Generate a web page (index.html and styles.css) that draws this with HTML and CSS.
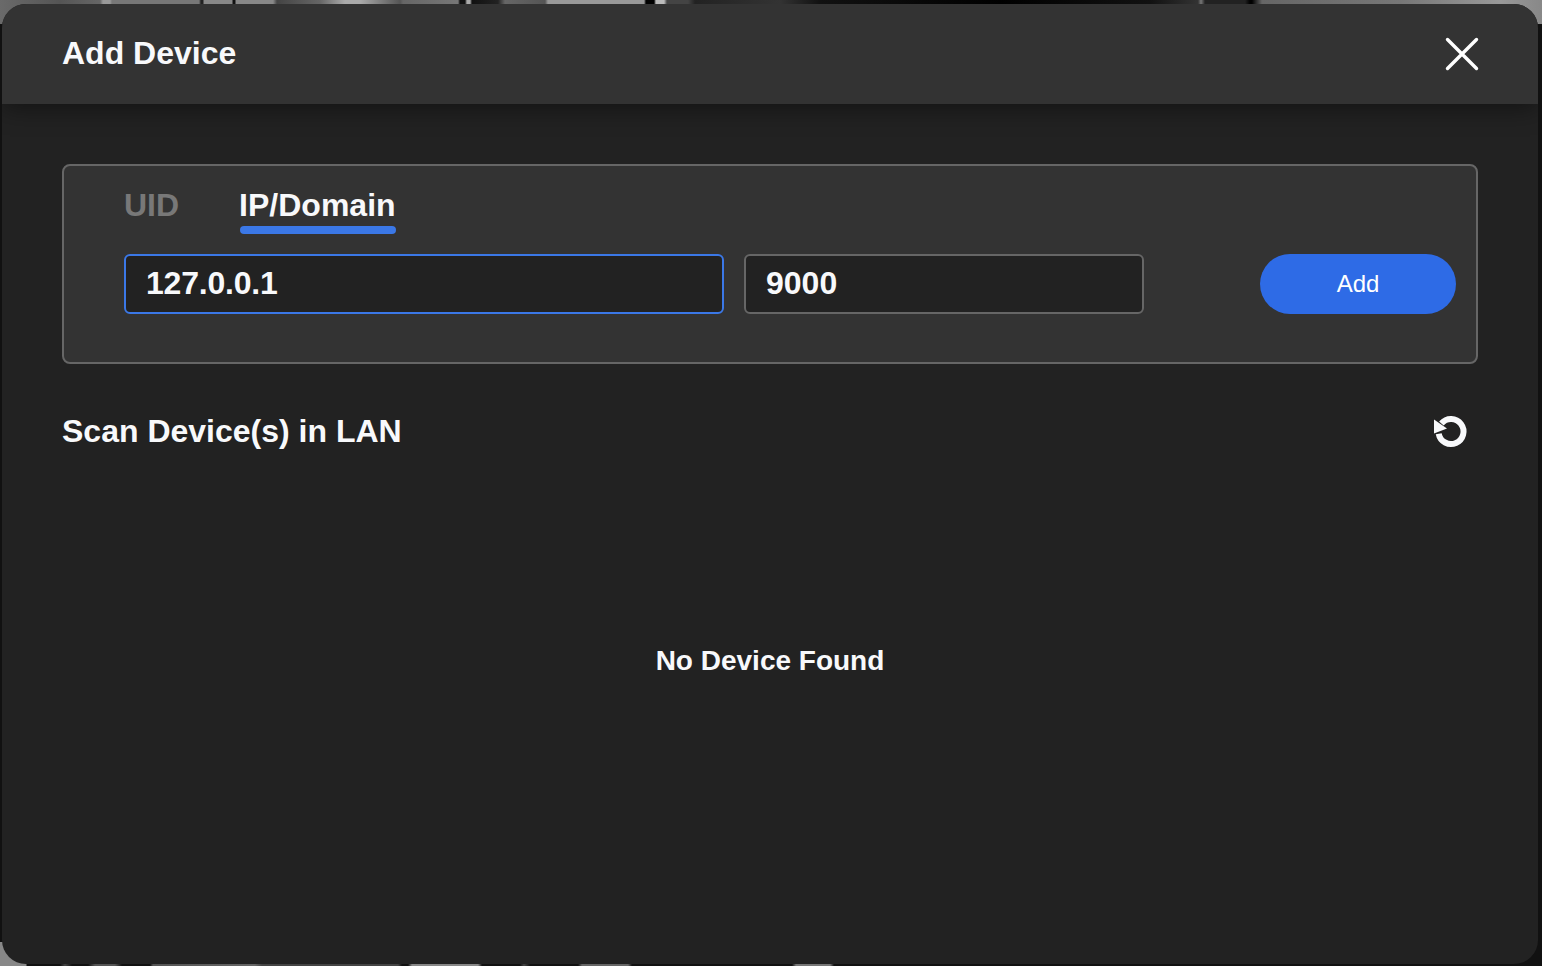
FILE: index.html
```html
<!DOCTYPE html>
<html lang="en">
<head>
<meta charset="utf-8">
<title>Add Device</title>
<link rel="stylesheet" href="styles.css">
</head>
<body>
<div class="backdrop">
  <section class="modal">
    <header class="modal-header">
      <h1 class="modal-title">Add Device</h1>
      <button class="close-btn" aria-label="Close">
        <svg width="34" height="34" viewBox="0 0 34 34"><path d="M2.5 2.5 L31.5 31.5 M31.5 2.5 L2.5 31.5" stroke="#fff" stroke-width="3.4" stroke-linecap="round" fill="none"/></svg>
      </button>
    </header>
    <div class="modal-body">
      <div class="panel">
        <div class="tabs">
          <div class="tab">UID</div>
          <div class="tab tab-active">IP/Domain</div>
        </div>
        <div class="form-row">
          <input class="field field-ip" value="127.0.0.1">
          <input class="field field-port" value="9000">
          <button class="add-btn">Add</button>
        </div>
      </div>
      <div class="scan-row">
        <h2 class="scan-title">Scan Device(s) in LAN</h2>
        <button class="refresh-btn" aria-label="Refresh">
          <svg width="36" height="36" viewBox="0 0 36 36"><path d="M8.4 10.5 A12.5 12.5 0 1 1 5.7 20.7" stroke="#f8f9fb" stroke-width="6" fill="none"/><path d="M1 6.5 L1 20.5 L14 15.5 Z" fill="#f8f9fb"/></svg>
        </button>
      </div>
      <p class="empty">No Device Found</p>
    </div>
  </section>
</div>
</body>
</html>
```
FILE: styles.css
```css
* { box-sizing: border-box; }
html, body { margin: 0; height: 100%; }
body { font-family: "Liberation Sans", Arial, sans-serif; overflow: hidden; }
.backdrop {
  width: 1542px;
  height: 966px;
  padding: 4px 4px 2px 2px;
  background:
    linear-gradient(90deg, #6a6a6a 0, #555 60px, #666 100px, #999 103px, #999 110px, #777 112px, #777 199px, #222 201px, #222 203px, #888 204px, #888 232px, #111 233px, #111 235px, #888 236px, #888 273px, #444 277px, #666 320px, #aaa 345px, #aaa 360px, #555 400px, #666 403px, #777 458px, #111 460px, #111 465px, #aaa 467px, #aaa 470px, #111 472px, #222 498px, #666 505px, #555 545px, #999 548px, #999 644px, #000 646px, #000 654px, #bbb 656px, #bbb 664px, #444 667px, #444 688px, #222 695px, #333 780px, #111 820px, #000 1000px, #111 1150px, #333 1198px, #777 1201px, #222 1205px, #222 1245px, #000 1250px, #000 1252px, #666 1262px, #777 1400px, #999 1500px, #888 1542px) top / 100% 24px no-repeat,
    linear-gradient(90deg, #888 0, #888 26px, #111 27px, #111 60px, #444 65px, #111 72px, #111 88px, #555 95px, #555 115px, #111 122px, #111 150px, #555 153px, #666 255px, #444 262px, #444 398px, #111 402px, #111 408px, #888 412px, #888 478px, #111 482px, #111 520px, #444 524px, #111 530px, #111 578px, #666 582px, #666 628px, #111 632px, #111 792px, #777 796px, #777 830px, #111 834px, #111 1542px) bottom / 100% 24px no-repeat,
    #111;
}
.modal {
  height: 960px;
  display: flex;
  flex-direction: column;
  background: #222;
  border-radius: 24px;
  overflow: hidden;
  color: #f8f9fb;
}
.modal-header {
  height: 100px;
  flex: none;
  display: flex;
  align-items: center;
  justify-content: space-between;
  padding: 0 59px 0 60px;
  background: #333;
  box-shadow: 0 4px 24px rgba(0, 0, 0, .45);
  position: relative;
}
.modal-title { margin: 0 0 2px; font-size: 32px; line-height: 40px; font-weight: 700; }
.close-btn, .refresh-btn {
  padding: 0;
  border: 0;
  background: none;
  display: flex;
}
.modal-body { flex: 1; padding: 60px 60px 0; }
.panel {
  height: 200px;
  background: #333;
  border: 2px solid #666;
  border-radius: 8px;
  padding: 0 20px 0 60px;
}
.tabs { display: flex; gap: 60px; height: 68px; }
.tab {
  height: 68px;
  padding-top: 19px;
  font-size: 32px;
  line-height: 40px;
  font-weight: 700;
  color: #787878;
}
.tab-active {
  color: #f8f9fb;
  position: relative;
}
.tab-active::after {
  content: "";
  position: absolute;
  left: 1px;
  right: 0;
  bottom: 0;
  height: 8px;
  background: #3b78e7;
  border-radius: 4px;
}
.form-row { display: flex; align-items: center; margin-top: 20px; }
.field {
  height: 60px;
  background: #222;
  border: 2px solid #666;
  border-radius: 6px;
  padding: 0 20px 2px;
  color: #f8f9fb;
  font: 700 32px/40px "Liberation Sans", Arial, sans-serif;
  outline: none;
}
.field-ip { width: 600px; border-color: #3b78e7; letter-spacing: -.2px; }
.field-port { width: 400px; margin-left: 20px; }
.add-btn {
  width: 196px;
  height: 60px;
  margin-left: auto;
  background: #2e6be6;
  border: 0;
  border-radius: 30px;
  color: #fff;
  font: 400 24px/30px "Liberation Sans", Arial, sans-serif;
}
.scan-row {
  display: flex;
  align-items: center;
  justify-content: space-between;
  margin-top: 47px;
  padding-right: 9px;
  height: 40px;
}
.scan-title { margin: 0; font-size: 32px; line-height: 40px; font-weight: 700; }
.empty {
  margin: 192px 0 0;
  text-align: center;
  font-size: 28px;
  line-height: 36px;
  font-weight: 700;
}
```
